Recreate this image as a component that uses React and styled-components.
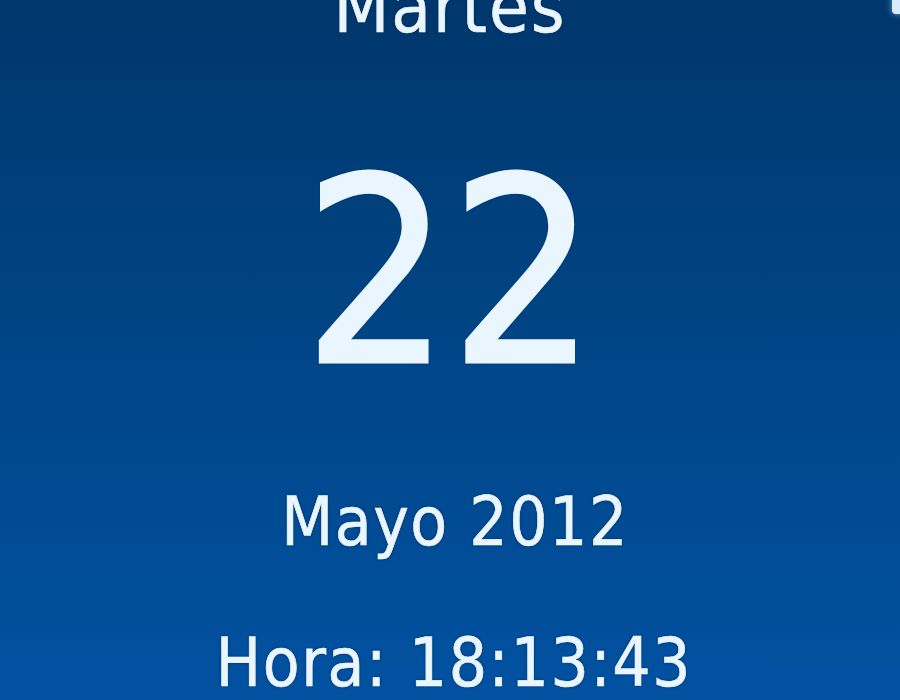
import React from 'react';
import styled, {createGlobalStyle} from 'styled-components';

const GlobalStyle = createGlobalStyle`
  html, body {
    margin: 0;
    padding: 0;
    height: 100%;
  }
  #root {
    height: 100%;
  }
`;

const Gadget = styled.div`
  position: relative;
  width: 900px;
  height: 700px;
  overflow: hidden;
  display: flex;
  flex-direction: column;
  align-items: center;
  background: linear-gradient(180deg, #00376c 0%, #004484 45%, #0252a2 100%);
  font-family: "DejaVu Sans Condensed", "DejaVu Sans", sans-serif;
  font-stretch: condensed;
  color: #e9f6ff;
`;

const Line = styled.div`
  font-size: ${p => p.size}px;
  letter-spacing: ${p => p.track || 0}px;
  line-height: 1;
  margin-top: ${p => p.gap}px;
  padding-left: ${p => p.shift || 0}px;
  white-space: nowrap;
  -webkit-text-stroke: ${p => p.stroke || 0.6}px #e9f6ff;
  text-shadow: 0 0 3px rgba(0, 20, 50, 0.6);
`;

const CloseCorner = styled.div`
  position: absolute;
  top: -6px;
  right: -8px;
  width: 16px;
  height: 20px;
  border-radius: 4px;
  background: #d8ecff;
  box-shadow: 0 0 6px rgba(180, 220, 255, 0.6);
`;

export default function App() {
    return (
        <>
            <GlobalStyle />
            <Gadget>
                <Line size={72} track={2} gap={-29}>Martes</Line>
                <Line size={256} stroke={3} gap={102}>22</Line>
                <Line size={67} track={1.5} shift={10} gap={88}>Mayo 2012</Line>
                <Line size={67} track={1.6} shift={8} gap={74}>Hora: 18:13:43</Line>
                <CloseCorner />
            </Gadget>
        </>
    )
}
